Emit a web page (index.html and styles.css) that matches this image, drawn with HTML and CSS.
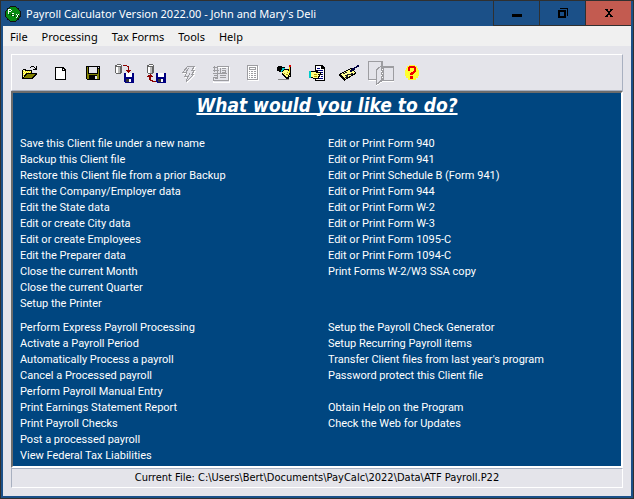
FILE: index.html
```html
<!DOCTYPE html>
<html lang="en">
<head>
  <meta charset="UTF-8" />
  <meta name="viewport" content="width=device-width, initial-scale=1" />
  <title>Payroll Calculator Version 2022.00</title>
  <link rel="stylesheet" href="styles.css">
</head>
<body>
  <div class="window">
    <header class="title-bar">
      <svg class="app-icon" viewBox="0 0 16 16" aria-hidden="true">
        <circle cx="8" cy="8" r="8" fill="#111" />
        <circle cx="8" cy="8" r="7" fill="#078a12" />
        <path d="M3 3h3v1h-3zM3 4h1v4h-1zM6 4h1v1h-1zM4 5h2v1h-2zM7 7h2v1h-2zM7 9h2v1h-2zM11 8h1v1h-1zM13 8h1v1h-1zM12 9h1v2h-1zM11 11h1v1h-1z" fill="#fff" />
        <path d="M4 8h1v1h-1zM6 8h1v2h-1zM9 9h1v2h-1zM13 9h1v2h-1zM12 12h1v1h-1z" fill="#043c08" />
      </svg>
      <h1>Payroll Calculator Version 2022.00 - John and Mary's Deli</h1>
      <div class="window-buttons">
        <button type="button" aria-label="Minimize">
          <svg viewBox="0 0 10 10"><path d="M0 6h10v3h-10z" /></svg>
        </button>
        <button type="button" aria-label="Restore">
          <svg viewBox="0 0 10 10"><path d="M0 2h8v8h-8zM2 4v4h4v-4zM2 0h8v8h-1v-7h-7z" fill-rule="evenodd" /></svg>
        </button>
        <button type="button" class="close" aria-label="Close">
          <svg viewBox="0 0 10 10"><path d="M1 1h3v1h-3zM6 1h3v1h-3zM2 2h2v1h-2zM6 2h2v1h-2zM3 3h4v1h-4zM4 4h2v2h-2zM3 6h4v1h-4zM2 7h2v1h-2zM6 7h2v1h-2zM1 8h3v1h-3zM6 8h3v1h-3z" /></svg>
        </button>
      </div>
    </header>

    <nav class="menu-bar">
      <button type="button">File</button>
      <button type="button">Processing</button>
      <button type="button">Tax Forms</button>
      <button type="button">Tools</button>
      <button type="button">Help</button>
    </nav>

    <main>
      <div class="toolbar">
        <button type="button" aria-label="Open file">
          <svg viewBox="0 0 32 24">
            <path d="M10 8h3v1h6v4h-6l-3 5h-1v-9h1z" fill="#000" />
            <path d="M10 9h2v1h6v3h-5l-3 4z" fill="#ffffa0" />
            <path d="M10 10h1v1h-1zM12 10h1v1h-1zM14 10h1v1h-1zM16 10h1v1h-1zM11 11h1v1h-1zM13 11h1v1h-1zM15 11h1v1h-1zM17 11h1v1h-1zM10 12h1v1h-1zM12 12h1v1h-1zM10 14h1v1h-1z" fill="#f4e800" />
            <path d="M13 12h11v1l-5 5h-10z" fill="#000" />
            <path d="M14 13h8l-4 4h-7z" fill="#808000" />
            <path d="M17 6h1v1h-1zM18 5h3v1h-3zM21 6h1v1h-1zM23 5h1v4h-4v-1h2v-1h1z" fill="#000" />
          </svg>
        </button>
        <button type="button" aria-label="New file">
          <svg viewBox="0 0 32 24">
            <path d="M10 6h8l3 3v10h-11z" fill="#000" />
            <path d="M11 7h6v3h3v8h-9z" fill="#fff" />
            <path d="M18 8h1v1h-1z" fill="#fff" />
          </svg>
        </button>
        <button type="button" aria-label="Save">
          <svg viewBox="0 0 32 24">
            <path d="M9 5h14v14h-13l-1-1z" fill="#000" />
            <path d="M10 6h1v7h10v-5h1v10h-2v-4h-8v4h-2z" fill="#808000" />
            <path d="M12 6h8v6h-8z" fill="#e4e4ea" />
            <path d="M21 6h1v1h-1zM18 15h2v3h-2z" fill="#e4e4ea" />
          </svg>
        </button>
        <button type="button" aria-label="Backup">
          <svg viewBox="0 0 32 24">
            <path d="M8 3h4v1h1v8h-1v1h-5v-1h-1v-8h2z" fill="#666" />
            <path d="M8 4h4v1h-4zM7 6h2v6h-2z" fill="#fff" />
            <path d="M9 6h2v6h-2z" fill="#bbb" />
            <path d="M14 4h4v1h2v4h2v1h-1v1h-1v1h-1v-1h-1v-1h-1v-1h2v-3h-1v-1h-4z" fill="#8b0000" />
            <path d="M15 12h10v10h-9l-1-1z" fill="#000080" />
            <path d="M17 12h6v4h-6zM20 18h2v3h-2z" fill="#fff" />
            <path d="M17 18h3v3h-3z" fill="#333" />
          </svg>
        </button>
        <button type="button" aria-label="Restore backup">
          <svg viewBox="0 0 32 24">
            <path d="M8 3h4v1h1v8h-1v1h-5v-1h-1v-8h2z" fill="#666" />
            <path d="M8 4h4v1h-4zM7 6h2v6h-2z" fill="#fff" />
            <path d="M9 6h2v6h-2z" fill="#bbb" />
            <path d="M9 13h1v1h1v1h1v1h-2v3h2v1h3v1h-4v-1h-2v-1h-1v-3h-2v-1h1v-1h2z" fill="#8b0000" />
            <path d="M15 12h10v10h-9l-1-1z" fill="#000080" />
            <path d="M17 12h6v4h-6zM20 18h2v3h-2z" fill="#fff" />
            <path d="M17 18h3v3h-3z" fill="#333" />
          </svg>
        </button>
        <button type="button" aria-label="Express payroll" disabled>
          <svg viewBox="0 0 32 24">
            <path d="M15 5h7l-3 4h3l-3 4h2l-8 8l2-6h-3l2-4h-4z" fill="none" stroke="#fff" transform="translate(1 1)" />
            <path d="M15 5h7l-3 4h3l-3 4h2l-8 8l2-6h-3l2-4h-4z" fill="#e4e4ea" stroke="#9d9da1" />
            <path d="M16 7l-3 4M17 12l-2 4" stroke="#9d9da1" />
          </svg>
        </button>
        <button type="button" aria-label="Payroll period" disabled>
          <svg viewBox="0 0 32 24">
            <path d="M12 6h12v15h-16v-4" fill="none" stroke="#fff" />
            <path d="M12 5h11v14h-15v-3h4z" fill="none" stroke="#9d9da1" />
            <path d="M8 6h5v1h-5zM9 5h1v6h-1zM12 5h1v6h-1zM8 9h6v1h-6zM8 12h14v1h-14zM15 7h1v5h-1zM17 7h4v1h-4zM17 9h4v1h-4zM20 9h1v3h-1zM17 11h4v1h-4zM9 14h4v1h-4zM15 14h6v1h-6zM15 16h6v1h-6zM10 17h3v1h-3z" fill="#9d9da1" />
          </svg>
        </button>
        <button type="button" aria-label="Calculator" disabled>
          <svg viewBox="0 0 32 24">
            <path d="M11 5h11v15h-11z" fill="#fff" />
            <path d="M10 4h11v15h-11zM11 5v13h9v-13zM12 6h7v3h-7zM13 7v1h5v-1zM12 10h1v1h-1zM14 10h2v1h-2zM17 10h2v1h-2zM12 12h1v1h-1zM14 12h2v1h-2zM17 12h2v1h-2zM12 14h1v1h-1zM14 14h2v1h-2zM17 14h2v1h-2zM12 16h1v1h-1zM14 16h2v1h-2zM17 16h2v1h-2z" fill="#9d9da1" fill-rule="evenodd" />
          </svg>
        </button>
        <button type="button" aria-label="Manual entry">
          <svg viewBox="0 0 32 24">
            <path d="M9 18h11v1h-11z" fill="#888" />
            <path d="M9 5h4v1h3v4h-3v1h-3v-1h-2v-4h1z" fill="#000" />
            <path d="M13 7h3v2h-1v1h-2v1h-1v-2h1z" fill="#0cc" />
            <path d="M13 10l3-2h4v2l2 2v4h-2v2h-3l-4-5z" fill="#000" />
            <path d="M13 11l3-2h2l3 3v3h-2v1h-2z" fill="#ffff80" />
            <path d="M15 12h1v1h-1zM17 13h2v1h-2zM18 11h1v1h-1z" fill="#b0a000" />
            <path d="M20 5h2v9h-2zM19 14h1v3h-1z" fill="#000" />
            <path d="M20 4h2v2h-2z" fill="#e00000" />
            <path d="M20 6h1v6h-1z" fill="#e8d800" />
          </svg>
        </button>
        <button type="button" aria-label="Earnings statement">
          <svg viewBox="0 0 32 24">
            <path d="M14 4h7l3 3v13h-10z" fill="#000" />
            <path d="M15 5h5v3h3v11h-8z" fill="#fff" />
            <path d="M16 7h3v1h-3zM16 9h6v1h-6zM18 11h4v1h-4zM20 13h2v1h-2zM20 15h2v1h-2zM17 17h5v1h-5z" fill="#000080" />
            <path d="M9 10h5v-1h3v2h3v2h1v1h-2v2h-1v2h-6v-1h-3z" fill="#000" />
            <path d="M10 11h5v1h4v1h-2v1h1v1h-1v2h-5v-1h-2z" fill="#ffff80" />
            <path d="M13 13h3v1h-3zM13 15h3v1h-3z" fill="#b0a000" />
            <path d="M8 10h2v7h-2z" fill="#0cc" />
          </svg>
        </button>
        <button type="button" aria-label="Print checks">
          <svg viewBox="0 0 32 24">
            <path d="M6 13l12-6l6 5l-13 8l-5-5z" fill="#000" />
            <path d="M8 13l10-5l4 4l-10 6z" fill="#ffff90" />
            <path d="M10 13l4-2M12 15l5-2M12 17l3-2M17 14l3-2" stroke="#222" fill="none" />
            <path d="M24 4h2v2h-2v1h-2v2h-2v1h-1v1h-2v-2h1v-1h1v-1h2v-1h2v-1h1z" fill="#000040" />
          </svg>
        </button>
        <button type="button" aria-label="Close program" disabled>
          <svg viewBox="0 0 32 24">
            <path d="M4 1h14v5h11v15h-11l-7 4v-5h-7z" fill="#fff" />
            <path d="M3 0h15v5h11v15h-11l-7 4v-5h-8z" fill="#9d9da1" />
            <path d="M4 1h12v4l-5 3v10h-7zM19 7h9v12h-9zM12 9l4-3v13l-4 3z" fill="#e4e4ea" />
            <path d="M17 8h1v1h-1zM16 10h1v1h-1zM17 12h1v1h-1zM16 14h1v1h-1zM17 16h1v1h-1z" fill="#fff" />
          </svg>
        </button>
        <button type="button" aria-label="Help">
          <svg viewBox="0 0 32 24">
            <path d="M12 4h6v1h2v2h1v2h1v6h-1v2h-2v2h-8v-2h-2v-2h-1v-6h1v-2h1v-2h2z" fill="#ffff30" />
            <path d="M12 5h6v1h1v5h-1v1h-1v1h-1v1h-3v-2h1v-1h2v-1h1v-3h-4v3h-2v-4h1zM13 15h3v3h-3z" fill="#f00000" />
          </svg>
        </button>
      </div>

      <section class="tasks">
        <h2>What would you like to do?</h2>
        <div class="task-columns">
          <ul>
            <li><a href="#">Save this Client file under a new name</a></li>
            <li><a href="#">Backup this Client file</a></li>
            <li><a href="#">Restore this Client file from a prior Backup</a></li>
            <li><a href="#">Edit the Company/Employer data</a></li>
            <li><a href="#">Edit the State data</a></li>
            <li><a href="#">Edit or create City data</a></li>
            <li><a href="#">Edit or create Employees</a></li>
            <li><a href="#">Edit the Preparer data</a></li>
            <li><a href="#">Close the current Month</a></li>
            <li><a href="#">Close the current Quarter</a></li>
            <li><a href="#">Setup the Printer</a></li>
          </ul>
          <ul>
            <li><a href="#">Edit or Print Form 940</a></li>
            <li><a href="#">Edit or Print Form 941</a></li>
            <li><a href="#">Edit or Print Schedule B (Form 941)</a></li>
            <li><a href="#">Edit or Print Form 944</a></li>
            <li><a href="#">Edit or Print Form W-2</a></li>
            <li><a href="#">Edit or Print Form W-3</a></li>
            <li><a href="#">Edit or Print Form 1095-C</a></li>
            <li><a href="#">Edit or Print Form 1094-C</a></li>
            <li><a href="#">Print Forms W-2/W3 SSA copy</a></li>
          </ul>
          <ul>
            <li><a href="#">Perform Express Payroll Processing</a></li>
            <li><a href="#">Activate a Payroll Period</a></li>
            <li><a href="#">Automatically Process a payroll</a></li>
            <li><a href="#">Cancel a Processed payroll</a></li>
            <li><a href="#">Perform Payroll Manual Entry</a></li>
            <li><a href="#">Print Earnings Statement Report</a></li>
            <li><a href="#">Print Payroll Checks</a></li>
            <li><a href="#">Post a processed payroll</a></li>
            <li><a href="#">View Federal Tax Liabilities</a></li>
          </ul>
          <ul>
            <li><a href="#">Setup the Payroll Check Generator</a></li>
            <li><a href="#">Setup Recurring Payroll items</a></li>
            <li><a href="#">Transfer Client files from last year's program</a></li>
            <li><a href="#">Password protect this Client file</a></li>
            <li class="group-start"><a href="#">Obtain Help on the Program</a></li>
            <li><a href="#">Check the Web for Updates</a></li>
          </ul>
        </div>
      </section>

      <footer class="status-bar">Current File: C:\Users\Bert\Documents\PayCalc\2022\Data\ATF Payroll.P22</footer>
    </main>
  </div>
</body>
</html>
```
FILE: styles.css
```css
* {
  margin: 0;
  padding: 0;
  box-sizing: border-box;
}

body {
  font-family: "DejaVu Sans Condensed", Tahoma, sans-serif;
  font-size: 11px;
  color: #000;
}

button {
  font: inherit;
  color: inherit;
  background: none;
  border: none;
}

svg {
  display: block;
  shape-rendering: crispEdges;
}

.window {
  display: flex;
  flex-direction: column;
  min-height: 100vh;
  background: #1b5088;
  border: 1px solid #303030;
  padding: 0 2px 2px;
}

/* title bar */
.title-bar {
  display: flex;
  align-items: center;
  height: 25px;
  padding-left: 2px;
  color: #fff;
}

.app-icon {
  width: 16px;
  height: 16px;
  margin-right: 5px;
}

.title-bar h1 {
  flex: 1;
  font-family: "Noto Sans", "Segoe UI", sans-serif;
  font-size: 11px;
  font-weight: 400;
  white-space: nowrap;
}

.window-buttons {
  display: flex;
  align-self: stretch;
}

.window-buttons button {
  display: flex;
  align-items: center;
  justify-content: center;
  width: 46px;
  border-left: 1px solid #303030;
  border-bottom: 1px solid #303030;
}

.window-buttons svg {
  width: 10px;
  height: 10px;
}

.window-buttons .close {
  background: #c35b50;
}

/* menu */
.menu-bar {
  display: flex;
  height: 20px;
  background: #f0f0f0;
}

.menu-bar button {
  padding: 0 7px;
  font-family: "Noto Sans", "Segoe UI", sans-serif;
}

main {
  flex: 1;
  display: flex;
  flex-direction: column;
  padding: 8px;
  background: #e4e4ea;
}

/* toolbar */
.toolbar {
  display: flex;
  height: 37px;
  padding: 6px 1px;
  border: 1px solid #fff;
  border-right-color: #a8b0c0;
  border-bottom-color: #a8b0c0;
}

.toolbar button {
  width: 32px;
  height: 24px;
}

.toolbar svg {
  width: 32px;
  height: 24px;
  overflow: visible;
}

/* task panel */
.tasks {
  flex: 1;
  padding: 0 7px 1px;
  background: #004680;
  border: 2px solid #6c6c6c;
  border-right-color: #fff;
  border-bottom-color: #fff;
  color: #fff;
}

.tasks h2 {
  padding-left: 20px;
  font-size: 19px;
  font-style: italic;
  line-height: 24px;
  text-align: center;
  text-decoration: underline;
  text-decoration-thickness: 2px;
  text-decoration-skip-ink: none;
  text-underline-offset: 1px;
}

.task-columns {
  display: grid;
  grid-template-columns: 1fr 1fr;
  gap: 8px 22px;
  padding-top: 19px;
}

.task-columns ul {
  list-style: none;
  font-family: Roboto, Tahoma, sans-serif;
  line-height: 16px;
}

.task-columns a {
  color: inherit;
  text-decoration: none;
}

.task-columns a:hover {
  text-decoration: underline;
}

.group-start {
  margin-top: 16px;
}

.status-bar {
  height: 20px;
  line-height: 18px;
  text-align: center;
  border: 1px solid #fff;
  border-top-color: #a8b0c0;
  border-left-color: #a8b0c0;
}
```
